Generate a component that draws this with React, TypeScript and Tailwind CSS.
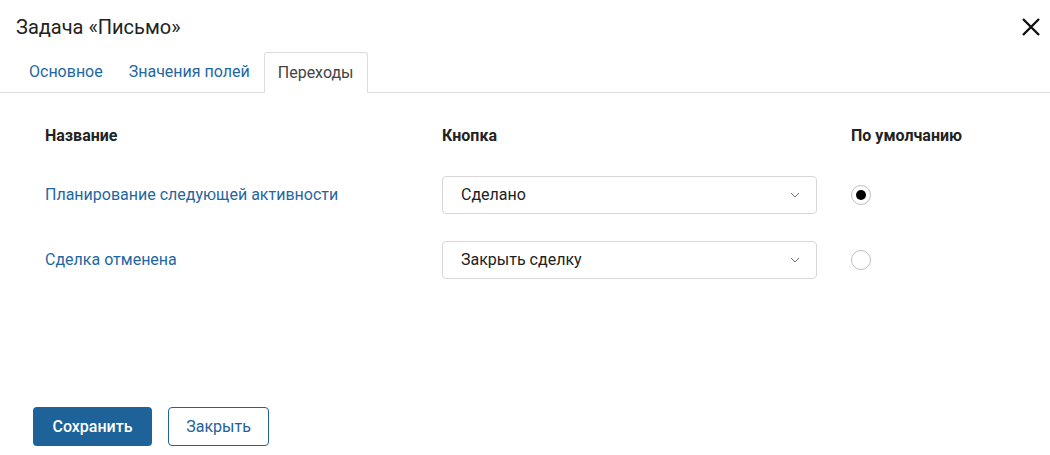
import React from "react";

const Chevron = () => (
  <svg width="10" height="6" viewBox="0 0 10 6" className="text-gray-500"><path d="M1 1l4 4 4-4" fill="none" stroke="currentColor" strokeWidth="1"/></svg>
);

function Row({ name, value, checked }: { name: string; value: string; checked?: boolean }) {
  return (
    <div className="flex items-center h-[38px]">
      <div className="w-[397px] text-[16px] text-[#1f67a0]">{name}</div>
      <div className="w-[375px] h-[38px] border border-[#d7d7d7] rounded-[4px] flex items-center justify-between pl-[18px] pr-[16px] text-[16px] text-[#222]">
        <span>{value}</span><Chevron />
      </div>
      <div className="ml-[34px] w-[20px] h-[20px] rounded-full border border-[#bdbdbd] flex items-center justify-center bg-white">
        {checked && <div className="w-[10px] h-[10px] rounded-full bg-black" />}
      </div>
    </div>
  );
}

export default function App() {
  return (
    <div className="w-[1050px] h-[455px] bg-white relative" style={{ fontFamily: "Roboto, sans-serif" }}>
      <div className="flex items-center justify-between pl-[16px] pr-[8px] pt-[13px] h-[40px]">
        <div className="text-[20px] text-[#222]">Задача «Письмо»</div>
        <svg width="20" height="20" viewBox="0 0 20 20" className="mr-[1px] mt-[1px]"><path d="M2 2l16 16M18 2L2 18" stroke="#111" strokeWidth="2.4"/></svg>
      </div>
      <div className="flex items-end h-[41px] mt-[12px] border-b border-[#dcdcdc] pl-[16px]">
        <div className="px-[13px] h-[40px] flex items-center text-[16px] text-[#1f67a0]">Основное</div>
        <div className="px-[13px] h-[40px] flex items-center text-[16px] text-[#1f67a0]">Значения полей</div>
        <div className="px-[13px] h-[41px] -mb-px flex items-center text-[16px] text-[#444] border border-[#dcdcdc] border-b-white bg-white rounded-t-[3px] ml-[1px]">Переходы</div>
      </div>
      <div className="pl-[45px] pt-[33px]">
        <div className="flex text-[16px] font-bold text-[#222] h-[20px] items-center">
          <div className="w-[397px]">Название</div>
          <div className="w-[409px]">Кнопка</div>
          <div>По умолчанию</div>
        </div>
        <div className="mt-[30px] flex flex-col gap-[27px]">
          <Row name="Планирование следующей активности" value="Сделано" checked />
          <Row name="Сделка отменена" value="Закрыть сделку" />
        </div>
      </div>
      <div className="absolute left-[33px] top-[407px] flex gap-[16px]">
        <button className="h-[39px] w-[119px] rounded-[4px] bg-[#1d6298] text-white text-[16px] font-medium">Сохранить</button>
        <button className="h-[39px] w-[101px] rounded-[4px] border border-[#1d6298] text-[#1d6298] text-[16px]">Закрыть</button>
      </div>
    </div>
  );
}
